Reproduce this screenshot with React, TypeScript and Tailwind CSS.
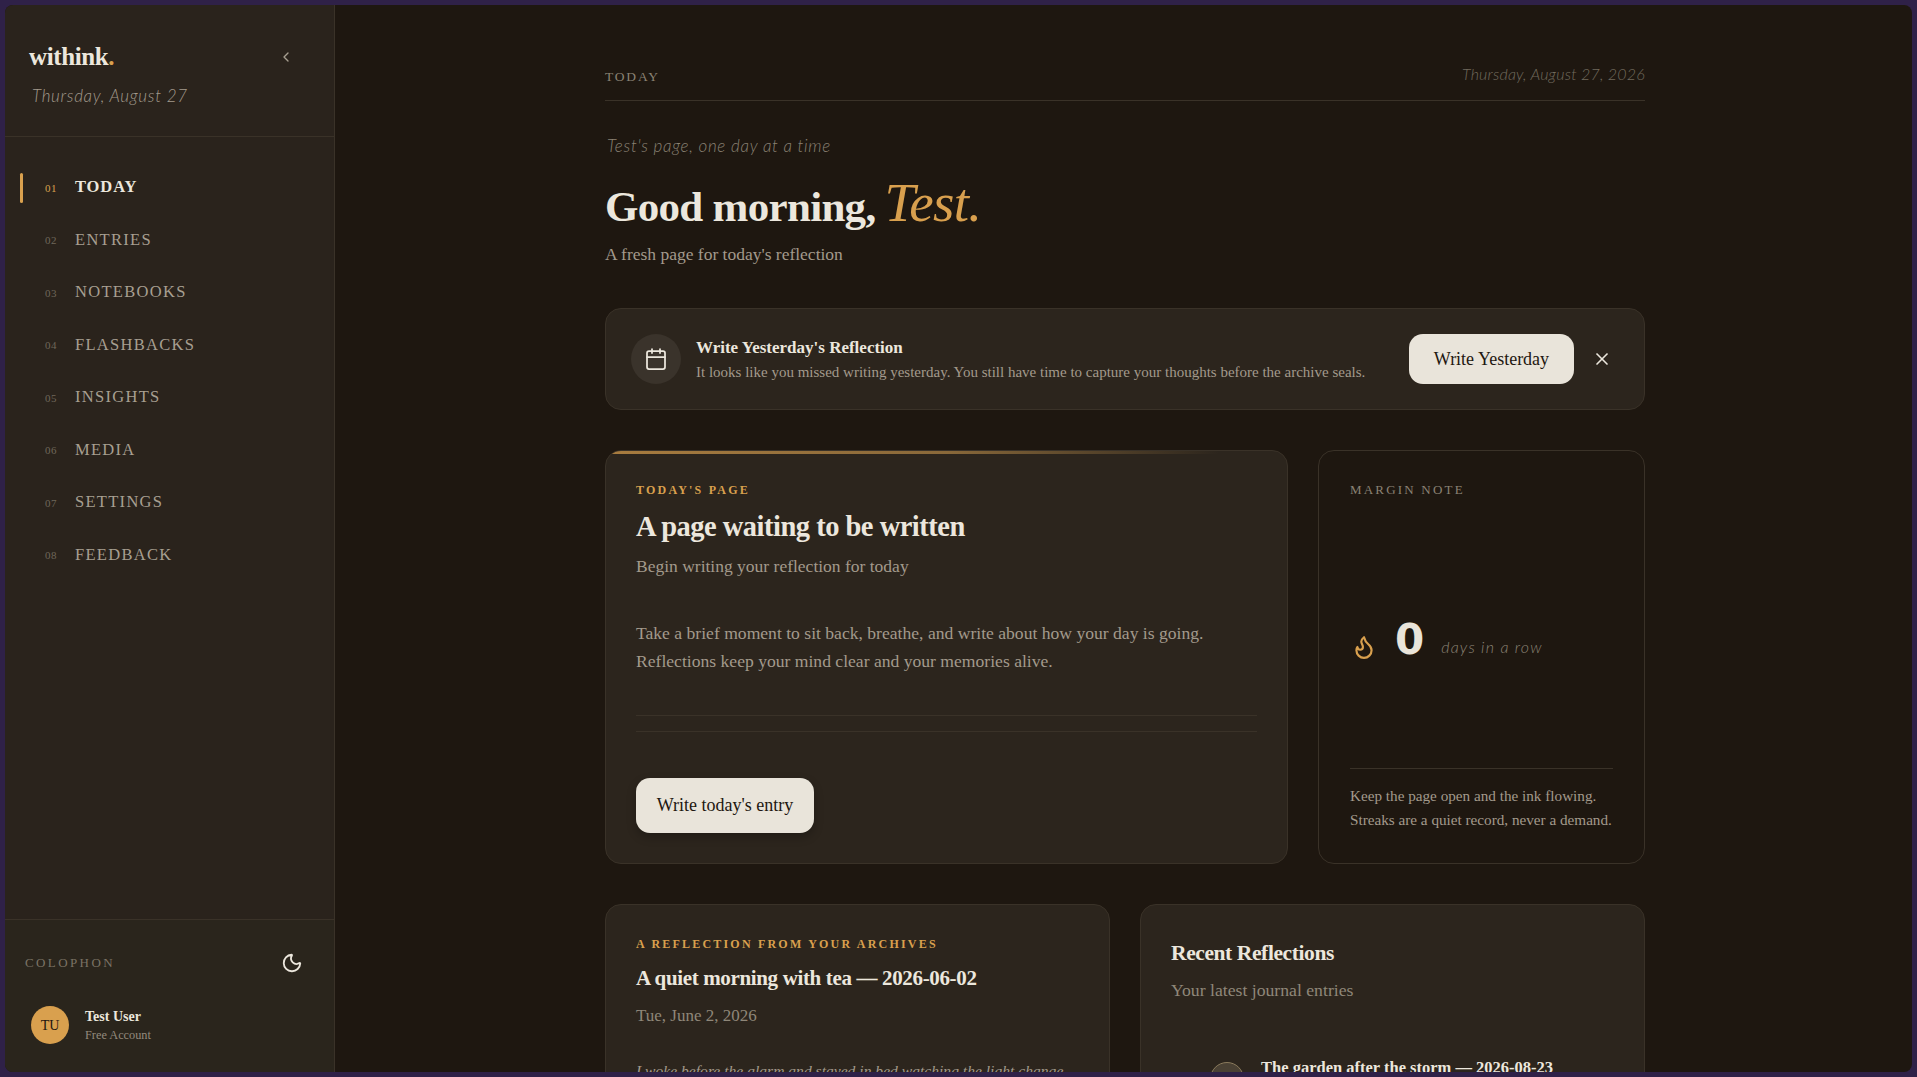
import { Calendar, ChevronLeft, Flame, Moon, X } from 'lucide-react'

const SERIF = 'font-["Liberation_Serif",serif]'

const navItems = ['Today', 'Entries', 'Notebooks', 'Flashbacks', 'Insights', 'Media', 'Settings', 'Feedback']

// ── Sidebar ───────────────────────────────────────────────────
function Sidebar() {
  return (
    <aside className="flex h-full w-[330px] shrink-0 flex-col border-r border-[#3a3228] bg-[#2a231c]">
      <div className="flex h-[132px] shrink-0 flex-col border-b border-[#3a3228] pl-[24px] pr-[40px] pt-[38px]">
        <div className="flex items-center justify-between">
          <span className="text-[25px] font-bold leading-[28px] tracking-[-0.4px] text-[#ece7dd]">
            withink<span className="text-[#d9a04e]">.</span>
          </span>
          <ChevronLeft size={16} className="text-[#a79f91]" />
        </div>
        <p className='mt-[14px] pl-[3px] font-["Lato",sans-serif] text-[17px] font-light italic leading-[22px] tracking-[0.7px] text-[#a39a8c]'>
          Thursday, August 27
        </p>
      </div>

      <nav className="flex flex-1 flex-col pt-[24.5px]">
        {navItems.map((label, i) => {
          const active = i === 0
          return (
            <div key={label} className="relative flex h-[52.5px] items-center pl-[40px]">
              {active && <span className="absolute left-[15px] top-[11px] h-[30px] w-[3px] rounded-sm bg-[#d9a04e]" />}
              <span className={`w-[30px] text-[11px] tracking-[0.5px] ${active ? 'text-[#d9a04e]' : 'text-[#6f675a]'}`}>
                {`0${i + 1}`}
              </span>
              <span
                className={`text-[16.5px] uppercase ${active ? 'font-bold tracking-[0.9px] text-[#ece7dd]' : 'tracking-[1.3px] text-[#a79f91]'}`}
              >
                {label}
              </span>
            </div>
          )
        })}
      </nav>

      <div className="h-[153px] shrink-0 border-t border-[#3a3228] bg-[#2a251c] px-[20px] pt-[32px]">
        <div className="flex items-center justify-between pr-[11px]">
          <span className="text-[13px] uppercase tracking-[2.4px] text-[#7b7365]">Colophon</span>
          <Moon size={22} className="text-[#ece7dd]" />
        </div>
        <div className="mt-[32px] flex items-center gap-[16px] pl-[6px]">
          <div className="flex h-[38px] w-[38px] items-center justify-center rounded-full bg-[#d9a04e] text-[14px] text-[#1e1710]">
            TU
          </div>
          <div className="mt-[2px]">
            <p className="text-[14px] font-bold leading-[18px] text-[#ece7dd]">Test User</p>
            <p className="text-[12.3px] leading-[18px] text-[#938a7c]">Free Account</p>
          </div>
        </div>
      </div>
    </aside>
  )
}

// ── Top notice ────────────────────────────────────────────────
function YesterdayBanner() {
  return (
    <div className="mt-[41px] flex h-[102px] items-center rounded-[16px] border border-[#3a3228] bg-[#2c251d] pl-[25px] pr-[32px]">
      <div className="flex h-[50px] w-[50px] shrink-0 items-center justify-center rounded-full bg-[#3a332b]">
        <Calendar size={24} strokeWidth={1.75} className="text-[#ece7dd]" />
      </div>
      <div className="ml-[15px] flex-1">
        <p className="text-[17px] font-bold leading-[24px] text-[#ece7dd]">Write Yesterday's Reflection</p>
        <p className="mt-[1px] text-[15px] leading-[22px] text-[#a39a8c]">
          It looks like you missed writing yesterday. You still have time to capture your thoughts before the archive seals.
        </p>
      </div>
      <button className="h-[50px] w-[165px] rounded-[14px] bg-[#e9e4da] text-[18px] text-[#1e1710]">Write Yesterday</button>
      <X size={20} className="ml-[18px] text-[#ece7dd]" />
    </div>
  )
}

// ── Today's page + margin note ────────────────────────────────
function TodayCard() {
  return (
    <section className="relative h-[414px] overflow-hidden rounded-[16px] border border-[#3a3228] bg-[#2c251d] px-[30px] pt-[29px]">
      <div className="absolute left-0 right-0 top-0 h-[3px] bg-gradient-to-r from-[#a87c3f] via-[#8a693a] to-transparent to-[90%]" />
      <p className="text-[12px] font-bold uppercase leading-[20px] tracking-[2.2px] text-[#d9a04e]">Today's Page</p>
      <h2 className="mt-[7px] text-[28.5px] font-bold leading-[40px] tracking-[-0.5px] text-[#ece7dd]">A page waiting to be written</h2>
      <p className="mt-[5px] text-[17.5px] leading-[28px] text-[#a39a8c]">Begin writing your reflection for today</p>
      <p className="mt-[39px] text-[17.6px] leading-[28px] text-[#a39a8c]">
        Take a brief moment to sit back, breathe, and write about how your day is going.
        <br />
        Reflections keep your mind clear and your memories alive.
      </p>
      <div className="mt-[40px] h-[17px] border-y border-[#3a3228]" />
      <button className="mt-[46px] h-[55px] w-[178px] rounded-[14px] bg-[#e9e4da] text-[18px] text-[#1e1710] shadow-[0_4px_10px_rgba(0,0,0,0.25)]">
        Write today's entry
      </button>
    </section>
  )
}

function MarginNote() {
  return (
    <section className="flex h-[414px] flex-col rounded-[16px] border border-[#3a3228] bg-[#1e1710] px-[31px] pt-[29px]">
      <p className="text-[13px] uppercase leading-[20px] tracking-[2.2px] text-[#8a8274]">Margin Note</p>
      <div className="mt-[123px] flex h-[40px] items-center">
        <Flame size={26} className="ml-[1px] mt-[8px] text-[#d9a04e]" />
        <span className='ml-[18px] -mt-[7px] font-["DejaVu_Sans",sans-serif] text-[42px] font-bold leading-[40px] text-[#e9e4da]'>0</span>
        <span className='ml-[17px] mt-[7px] font-["Lato",sans-serif] text-[16px] font-light italic tracking-[1.2px] text-[#8a8274]'>
          days in a row
        </span>
      </div>
      <div className="mt-[105px] border-t border-[#3a3228] pt-[15px]">
        <p className="text-[15.2px] leading-[24px] text-[#a39a8c]">
          Keep the page open and the ink flowing.
          <br />
          Streaks are a quiet record, never a demand.
        </p>
      </div>
    </section>
  )
}

// ── Bottom row, runs off the page ─────────────────────────────
function ArchiveCard() {
  return (
    <section className="h-[260px] rounded-[16px] border border-[#3a3228] bg-[#2c251d] px-[30px] pt-[29px]">
      <p className="text-[12px] font-bold uppercase leading-[20px] tracking-[2.2px] text-[#d9a04e]">A reflection from your archives</p>
      <h3 className="mt-[9px] text-[21px] font-bold leading-[30px] tracking-[-0.35px] text-[#ece7dd]">A quiet morning with tea — 2026-06-02</h3>
      <p className="mt-[10px] text-[17px] leading-[26px] text-[#8f8779]">Tue, June 2, 2026</p>
      <p className="mt-[29px] text-[15.6px] italic leading-[26px] text-[#a39a8c]">
        I woke before the alarm and stayed in bed watching the light change.
      </p>
    </section>
  )
}

function RecentCard() {
  return (
    <section className="h-[260px] rounded-[16px] border border-[#3a3228] bg-[#2c251d] px-[30px] pt-[33px]">
      <h3 className="text-[21.5px] font-bold leading-[30px] tracking-[-0.4px] text-[#ece7dd]">Recent Reflections</h3>
      <p className="mt-[9px] text-[17.7px] leading-[26px] text-[#8f8779]">Your latest journal entries</p>
      <div className="mt-[53px] flex pl-[39px]">
        <div className="mt-[6px] h-[34px] w-[34px] shrink-0 rounded-full border border-[#8a7a5c] bg-[#4a4134]" />
        <p className="ml-[17px] text-[16.5px] font-bold leading-[24px] text-[#ece7dd]">The garden after the storm — 2026-08-23</p>
      </div>
    </section>
  )
}

export default function App() {
  return (
    <div className={`h-screen w-full overflow-hidden bg-[#2f2148] p-[5px] ${SERIF}`}>
      <div className="flex h-full overflow-hidden rounded-[8px] bg-[#1e1710]">
        <Sidebar />
        <main className="flex-1 overflow-hidden pl-[270px] pt-[56px]">
          <div className="w-[1040px]">
            <header className="flex h-[40px] items-start justify-between border-b border-[#3a3228]">
              <span className="pt-[6px] text-[13.5px] uppercase leading-[20px] tracking-[1.8px] text-[#8a8274]">Today</span>
              <span className='pt-[2px] font-["Lato",sans-serif] text-[16px] font-light italic leading-[22px] tracking-[0.2px] text-[#716a5d]'>
                Thursday, August 27, 2026
              </span>
            </header>
            <p className='mt-[33px] pl-[2px] font-["Lato",sans-serif] text-[17px] font-light italic leading-[24px] tracking-[0.7px] text-[#8a8274]'>
              Test's page, one day at a time
            </p>
            <h1 className="mt-[16px] flex h-[58px] items-baseline text-[43px] font-bold leading-[58px] tracking-[-0.7px] text-[#ece7dd]">
              Good morning,
              <em className="ml-[9px] text-[55px] font-normal tracking-[-0.7px] text-[#d9a04e]">Test.</em>
            </h1>
            <p className="mt-[9px] text-[17.5px] leading-[26px] text-[#a39a8c]">A fresh page for today's reflection</p>
            <YesterdayBanner />
            <div className="mt-[40px] grid grid-cols-[683px_327px] gap-[30px]">
              <TodayCard />
              <MarginNote />
            </div>
            <div className="mt-[40px] grid grid-cols-2 gap-[30px]">
              <ArchiveCard />
              <RecentCard />
            </div>
          </div>
        </main>
      </div>
    </div>
  )
}
